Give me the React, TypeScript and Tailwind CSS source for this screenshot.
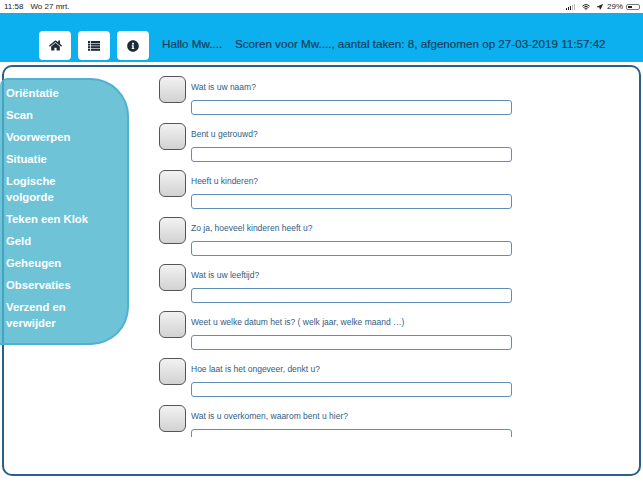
import type { ReactNode } from "react";
import { Navigation, Wifi } from "lucide-react";
import { FaHome, FaInfoCircle } from "react-icons/fa";

const MENU = [
  "Oriëntatie",
  "Scan",
  "Voorwerpen",
  "Situatie",
  "Logische volgorde",
  "Teken een Klok",
  "Geld",
  "Geheugen",
  "Observaties",
  "Verzend en verwijder",
];

const QUESTIONS = [
  "Wat is uw naam?",
  "Bent u getrouwd?",
  "Heeft u kinderen?",
  "Zo ja, hoeveel kinderen heeft u?",
  "Wat is uw leeftijd?",
  "Weet u welke datum het is? ( welk jaar, welke maand …)",
  "Hoe laat is het ongeveer, denkt u?",
  "Wat is u overkomen, waarom bent u hier?",
];

function StatusBar() {
  return (
    <div className="flex h-[13px] items-center justify-between bg-white pl-[4px] pr-[3px] text-[8px] leading-none text-[#222]">
      <div className="flex gap-[7px]">
        <span>11:58</span>
        <span>Wo 27 mrt.</span>
      </div>
      <div className="flex items-center gap-[3px]">
        <div className="flex h-[6px] items-end gap-[1px]">
          <span className="h-[2px] w-[1px] bg-[#222]" />
          <span className="h-[3px] w-[1px] bg-[#222]" />
          <span className="h-[4px] w-[1px] bg-[#222]" />
          <span className="h-[5px] w-[1px] bg-[#bbb]" />
          <span className="h-[6px] w-[1px] bg-[#bbb]" />
        </div>
        <Wifi size={8} strokeWidth={3} className="ml-[4px]" />
        <Navigation size={6} strokeWidth={3} className="ml-[4px] fill-[#222]" />
        <span className="ml-[1px]">29%</span>
        <div className="flex h-[6px] w-[14px] rounded-[2px] border border-[#777] p-[1px]">
          <span className="w-[4px] bg-[#222]" />
        </div>
      </div>
    </div>
  );
}

// four rows, bullet + bar
function ListIcon() {
  return (
    <svg width="12" height="10" viewBox="0 0 12 10" fill="currentColor">
      {[0, 2.6, 5.2, 7.8].map((y) => (
        <g key={y}>
          <rect x="0" y={y} width="2" height="2" />
          <rect x="2.8" y={y} width="9.2" height="2" />
        </g>
      ))}
    </svg>
  );
}

function Header() {
  return (
    <div className="flex h-[49px] items-end bg-[#0cb0ee] pb-[2px] pl-[39px]">
      <div className="flex gap-[7px]">
        <HeaderButton><FaHome size={13} /></HeaderButton>
        <HeaderButton><ListIcon /></HeaderButton>
        <HeaderButton><FaInfoCircle size={12} /></HeaderButton>
      </div>
      <div className="mb-[8px] ml-[13px] flex text-[11.65px] font-normal leading-[16px] text-[#173f5f] [-webkit-text-stroke:0.2px_#173f5f]">
        <span className="w-[73px]">Hallo Mw....</span>
        <span>Scoren voor Mw...., aantal taken: 8, afgenomen op 27-03-2019 11:57:42</span>
      </div>
    </div>
  );
}

function HeaderButton({ children }: { children: ReactNode }) {
  return (
    <div className="flex h-[29px] w-[32px] items-center justify-center rounded-[4px] bg-white text-[#1c2b36]">
      {children}
    </div>
  );
}

function Sidebar() {
  return (
    <nav className="absolute left-[-4px] top-[11px] h-[267px] w-[129px] rounded-r-[38px] rounded-tl-[8px] border-2 border-l-0 border-[#4fb0cf] bg-[#4bb4cc]/80 pl-[6px] pt-[5px]">
      {MENU.map((m) => (
        <div
          key={m}
          className="mb-[6px] w-[90px] text-[11.3px] font-bold leading-[16px] text-white"
        >
          {m}
        </div>
      ))}
    </nav>
  );
}

function Question({ text }: { text: string }) {
  return (
    <div className="flex h-[47px] gap-[5px]">
      <div className="h-[27px] w-[27px] shrink-0 rounded-[6px] border-[1.5px] border-[#555] bg-gradient-to-b from-[#f2f2f2] to-[#d2d2d2]" />
      <div className="flex w-[321px] flex-col">
        <div className="h-[24px] pt-[5px] text-[8.5px] leading-[13px] text-[#2f5d85]">{text}</div>
        <div className="h-[15px] rounded-[3px] border border-[#5f8fb5] bg-white" />
      </div>
    </div>
  );
}

export default function App() {
  return (
    <div className="h-[482px] w-[643px] overflow-hidden bg-white font-['Liberation_Sans',Arial,sans-serif]">
      <StatusBar />
      <Header />
      <main className="relative ml-[2px] mt-[3px] h-[411px] w-[639px] rounded-[10px] border-2 border-[#2a5f8f] bg-white">
        <Sidebar />
        <div className="ml-[155px] mt-[9px] h-[361px] overflow-hidden">
          {QUESTIONS.map((q) => (
            <Question key={q} text={q} />
          ))}
        </div>
      </main>
    </div>
  );
}
